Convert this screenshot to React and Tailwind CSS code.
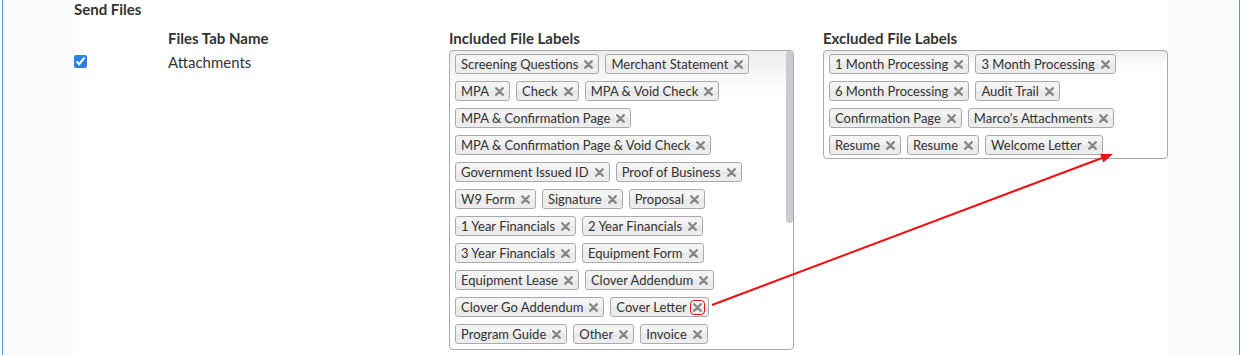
import React from "react";

const included = [
  "Screening Questions",
  "Merchant Statement",
  "MPA",
  "Check",
  "MPA & Void Check",
  "MPA & Confirmation Page",
  "MPA & Confirmation Page & Void Check",
  "Government Issued ID",
  "Proof of Business",
  "W9 Form",
  "Signature",
  "Proposal",
  "1 Year Financials",
  "2 Year Financials",
  "3 Year Financials",
  "Equipment Form",
  "Equipment Lease",
  "Clover Addendum",
  "Clover Go Addendum",
  "Cover Letter",
  "Program Guide",
  "Other",
  "Invoice",
];

const excluded = [
  "1 Month Processing",
  "3 Month Processing",
  "6 Month Processing",
  "Audit Trail",
  "Confirmation Page",
  "Marco's Attachments",
  "Resume",
  "Resume",
  "Welcome Letter",
];

const CloseIcon = () => (
  <svg width="9" height="9" viewBox="0 0 9 9" className="block">
    <path
      d="M1.2 1.2 L7.8 7.8 M7.8 1.2 L1.2 7.8"
      stroke="#858585"
      strokeWidth="2.3"
      strokeLinecap="round"
    />
  </svg>
);

const Tag = ({ label, marked }) => (
  <span className="inline-flex items-center h-[20px] border border-[#aaaaaa] rounded-[3px] bg-[linear-gradient(to_bottom,#f4f4f4_20%,#f0f0f0_50%,#e8e8e8_52%,#eeeeee_100%)] pl-[5px] pr-[5px] text-[13px] leading-none text-[#333] whitespace-nowrap">
    {label}
    <span
      className={
        marked
          ? "ml-[4px] -mr-[1px] p-[2px] rounded-[3px] outline outline-[1.5px] outline-[#e8141b] -my-[2px]"
          : "ml-[6px]"
      }
    >
      <CloseIcon />
    </span>
  </span>
);

const LabelBox = ({ labels, scroll }) => (
  <div
    className={
      "relative w-[345px] border border-[#aaaaaa] rounded-[4px] bg-[linear-gradient(to_bottom,#eeeeee_1%,#ffffff_15%)] overflow-hidden " +
      (scroll ? "h-[300px] pl-[5px] pr-[8px] pt-[3px]" : "pl-[5px] pr-[5px] pt-[3px] pb-[3px]")
    }
  >
    <div className="flex flex-wrap gap-x-[6px] gap-y-[7px]">
      {labels.map((l, i) => (
        <Tag key={i} label={l} marked={l === "Cover Letter"} />
      ))}
    </div>
    {scroll && (
      <div className="absolute top-0 right-0 w-[7px] h-[172px] rounded-full bg-[#c9cdd3]" />
    )}
  </div>
);

const App = () => {
  return (
    <div className="relative h-[355px] w-[1242px] bg-white pl-[2px] pr-[2px] font-['Lato',sans-serif] text-[#333] overflow-hidden">
      <div className="flex h-full border-x border-[#4d9de6] bg-[#f9fbfb]">
        <div className="ml-[70px] w-[1095px] h-full bg-white pl-[1px]">
          <h3 className="text-[15px] font-bold leading-[18px] text-[#333]">
            Send Files
          </h3>

          <div className="grid grid-cols-[94px_281px_374px_345px] mt-[11px]">
            <div />
            <div className="text-[15px] font-bold leading-[18px]">Files Tab Name</div>
            <div className="text-[15px] font-bold leading-[18px]">Included File Labels</div>
            <div className="text-[15px] font-bold leading-[18px]">Excluded File Labels</div>

            <div className="pt-[8px]">
              <input
                type="checkbox"
                checked
                readOnly
                className="block m-0 w-[13px] h-[13px] accent-[#2f7fe8]"
              />
            </div>
            <div className="text-[15px] leading-[18px] pt-[6px]">Attachments</div>
            <div className="mt-[3px]">
              <LabelBox labels={included} scroll />
            </div>
            <div className="mt-[3px]">
              <LabelBox labels={excluded} />
            </div>
          </div>
        </div>
      </div>

      {/* annotation arrow */}
      <svg className="absolute inset-0 pointer-events-none" width="1242" height="355">
        <line x1="712" y1="305" x2="1102" y2="158" stroke="#ee1111" strokeWidth="2" />
        <polygon points="1113,154 1103.4,162.4 1100.2,154" fill="#ee1111" />
      </svg>
    </div>
  );
};

export default App;
